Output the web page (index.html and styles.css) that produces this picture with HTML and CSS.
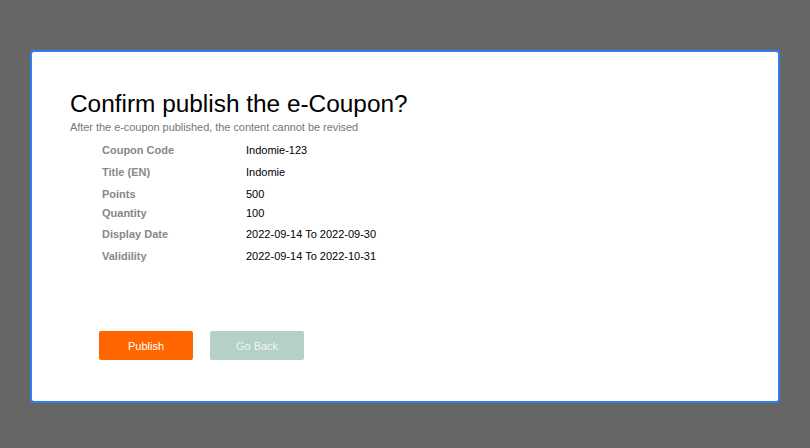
FILE: index.html
```html
<!DOCTYPE html>
<html>
<head>
<meta charset="utf-8">
<link rel="stylesheet" href="styles.css">
</head>
<body>
<div class="overlay">
  <div class="modal">
    <h1 class="title">Confirm publish the e-Coupon?</h1>
    <p class="subtitle">After the e-coupon published, the content cannot be revised</p>
    <div class="details">
      <div class="row r1"><span class="label">Coupon Code</span><span class="value">Indomie-123</span></div>
      <div class="row r2"><span class="label">Title (EN)</span><span class="value">Indomie</span></div>
      <div class="row r3"><span class="label">Points</span><span class="value">500</span></div>
      <div class="row r4"><span class="label">Quantity</span><span class="value">100</span></div>
      <div class="row r5"><span class="label">Display Date</span><span class="value">2022-09-14 To 2022-09-30</span></div>
      <div class="row r6"><span class="label">Validility</span><span class="value">2022-09-14 To 2022-10-31</span></div>
    </div>
    <div class="actions">
      <button class="btn btn-publish">Publish</button>
      <button class="btn btn-back">Go Back</button>
    </div>
  </div>
</div>
</body>
</html>
```
FILE: styles.css
```css
* { box-sizing: border-box; }
html, body { margin: 0; padding: 0; }
body {
  width: 810px;
  height: 448px;
  background: #666666;
  font-family: "Liberation Sans", Arial, sans-serif;
  overflow: hidden;
}
.overlay {
  padding: 50px 0 0 30px;
}
.modal {
  width: 750px;
  height: 353px;
  background: #ffffff;
  border: 2px solid #2f7fef;
  border-radius: 4px;
  padding: 37px 0 0 38px;
}
.title {
  margin: 0;
  font-size: 24.4px;
  line-height: 29px;
  font-weight: normal;
  color: #000;
}
.subtitle {
  margin: 3px 0 0 0;
  font-size: 11px;
  line-height: 13px;
  color: #777;
  letter-spacing: -0.05px;
}
.details {
  margin-top: 5px;
  padding-left: 32px;
  font-size: 11px;
}
.row {
  display: flex;
  height: 22px;
  align-items: center;
}
.r4 { margin-top: -3px; }
.r5 { margin-top: -1px; }
.label {
  width: 144px;
  font-weight: bold;
  color: #888;
}
.value {
  color: #000;
}
.actions {
  display: flex;
  gap: 17px;
  padding-left: 29px;
  margin-top: 64px;
}
.btn {
  width: 94px;
  height: 29px;
  border: none;
  border-radius: 2px;
  font-family: "Liberation Sans", Arial, sans-serif;
  font-size: 11px;
  color: #fff;
  padding: 0;
}
.btn-publish { background: #ff6600; }
.btn-back { background: #b5d1c7; color: #eef5f2; }
```
